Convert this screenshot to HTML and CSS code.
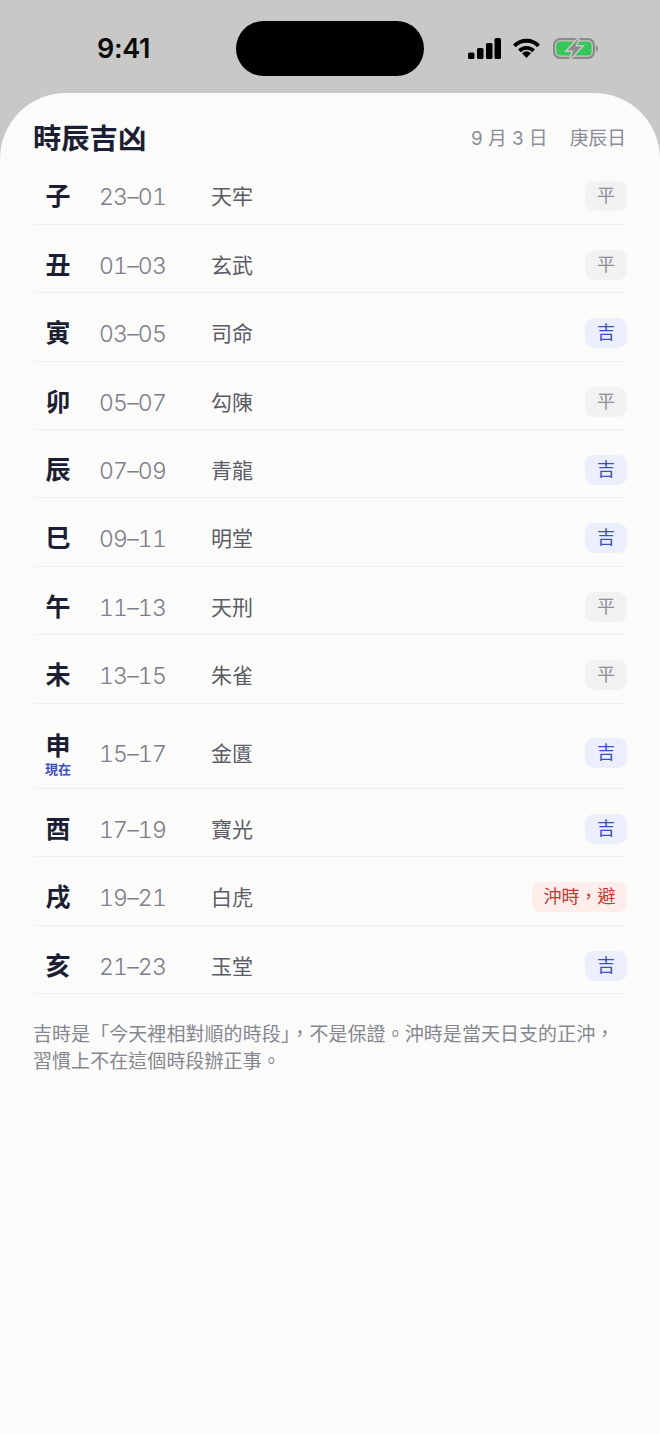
FILE: index.html
```html
<!DOCTYPE html>
<html lang="zh-Hant">
<head>
<meta charset="utf-8">
<title>時辰吉凶</title>
<link rel="stylesheet" href="styles.css">
</head>
<body>
<div class="status">
  <div class="clock">9:41</div>
  <div class="island"></div>
  <div class="indicators">
    <svg class="signal" width="33" height="21" viewBox="0 0 33 21"><rect x="0" y="14.5" width="6.5" height="6.5" rx="1.6"/><rect x="9" y="10" width="6.5" height="11" rx="1.6"/><rect x="18" y="5" width="6.5" height="16" rx="1.6"/><rect x="26.5" y="0" width="6.5" height="21" rx="1.6"/></svg>
    <svg class="wifi" width="27" height="20" viewBox="0 0 27 20"><path class="arc" d="M1.4 7.8A17 17 0 0 1 25.6 7.8"/><path class="arc" d="M6.4 12.8A10 10 0 0 1 20.6 12.8"/><path d="M13.5 20L9 15.2A6.4 6.4 0 0 1 18 15.2Z"/></svg>
    <svg class="battery" width="45" height="21" viewBox="0 0 45 21"><rect class="shell" x="1.1" y="1.1" width="39.8" height="18.8" rx="6"/><rect class="charge" x="3.4" y="3.4" width="35.2" height="14.2" rx="3.6"/><path class="nub" d="M43 7a4 4 0 0 1 0 7Z"/><path class="bolt" d="M25.5 0.5L14.5 12.4h6L17.5 20.5l11-11.9h-6Z"/></svg>
  </div>
</div>
<main class="sheet">
  <header class="head">
    <h1 class="title">時辰吉凶</h1>
    <div class="date"><span>9 月 3 日</span><span>庚辰日</span></div>
  </header>
  <ul class="list">
    <li class="row"><div class="branch"><b>子</b></div><span class="time">23–01</span><span class="name">天牢</span><span class="tag flat">平</span></li>
    <li class="row"><div class="branch"><b>丑</b></div><span class="time">01–03</span><span class="name">玄武</span><span class="tag flat">平</span></li>
    <li class="row"><div class="branch"><b>寅</b></div><span class="time">03–05</span><span class="name">司命</span><span class="tag good">吉</span></li>
    <li class="row"><div class="branch"><b>卯</b></div><span class="time">05–07</span><span class="name">勾陳</span><span class="tag flat">平</span></li>
    <li class="row"><div class="branch"><b>辰</b></div><span class="time">07–09</span><span class="name">青龍</span><span class="tag good">吉</span></li>
    <li class="row"><div class="branch"><b>巳</b></div><span class="time">09–11</span><span class="name">明堂</span><span class="tag good">吉</span></li>
    <li class="row"><div class="branch"><b>午</b></div><span class="time">11–13</span><span class="name">天刑</span><span class="tag flat">平</span></li>
    <li class="row"><div class="branch"><b>未</b></div><span class="time">13–15</span><span class="name">朱雀</span><span class="tag flat">平</span></li>
    <li class="row current"><div class="branch"><b>申</b><small class="now">現在</small></div><span class="time">15–17</span><span class="name">金匱</span><span class="tag good">吉</span></li>
    <li class="row"><div class="branch"><b>酉</b></div><span class="time">17–19</span><span class="name">寶光</span><span class="tag good">吉</span></li>
    <li class="row"><div class="branch"><b>戌</b></div><span class="time">19–21</span><span class="name">白虎</span><span class="tag bad">沖時，避</span></li>
    <li class="row"><div class="branch"><b>亥</b></div><span class="time">21–23</span><span class="name">玉堂</span><span class="tag good">吉</span></li>
  </ul>
  <p class="note">吉時是「今天裡相對順的時段」，不是保證。沖時是當天日支的正沖，習慣上不在這個時段辦正事。</p>
</main>
</body>
</html>
```
FILE: styles.css
```css
* { box-sizing: border-box; }
html, body { margin: 0; padding: 0; }
body {
  width: 660px;
  height: 1434px;
  overflow: hidden;
  background: #c8c8c6;
  font-family: Inter, "Noto Sans CJK TC", sans-serif;
}
.status {
  height: 93px;
  padding-top: 21px;
  display: grid;
  grid-template-columns: 1fr 188px 1fr;
}
.clock {
  height: 55px;
  line-height: 55px;
  padding-left: 97px;
  font-size: 27px;
  font-weight: 600;
  letter-spacing: -0.3px;
  color: #0b0b0b;
}
.island { height: 55px; border-radius: 28px; background: #000; }
.indicators {
  height: 55px;
  padding-left: 44px;
  display: flex;
  align-items: center;
}
.signal { fill: #000; margin-right: 12px; }
.wifi { fill: #000; margin-right: 13px; margin-top: -1px; }
.wifi .arc { fill: none; stroke: #000; stroke-width: 3.8; }
.shell { fill: none; stroke: #8b8b89; stroke-width: 2.2; }
.charge { fill: #34c759; }
.nub { fill: #8b8b89; }
.bolt { fill: #8b8b89; stroke: #c8c8c6; stroke-width: 3; paint-order: stroke; }
.sheet {
  height: 1341px;
  background: #fbfbf9;
  border-radius: 66px 66px 0 0;
  padding: 0 34px;
}
.head {
  height: 63.4px;
  padding-top: 29px;
  display: flex;
  justify-content: space-between;
  align-items: flex-start;
}
.title {
  margin: 0 0 0 -1px;
  font-size: 28.3px;
  line-height: 34px;
  font-weight: 700;
  color: #1c1f33;
}
.date {
  display: flex;
  gap: 22px;
  font-size: 18.8px;
  line-height: 34px;
  color: #8a8d98;
}
.list { margin: 0; padding: 0; list-style: none; }
.row {
  display: flex;
  align-items: center;
  padding: 25px 0 12.4px;
  border-bottom: 1px solid #f0f0ee;
}
.row.current { padding: 24px 0 9.4px; }
.current .branch { padding-top: 4px; }
.branch {
  width: 48px;
  margin-right: 17px;
  text-align: center;
  display: flex;
  flex-direction: column;
  align-items: center;
}
.branch b {
  font-size: 25px;
  line-height: 28px;
  height: 28px;
  font-weight: 700;
  color: #1c1f33;
}
.now {
  font-size: 13px;
  line-height: 19px;
  font-weight: 700;
  color: #3b4fc4;
}
.time {
  width: 112px;
  padding-top: 2px;
  font-size: 23px;
  line-height: 28px;
  font-weight: 300;
  letter-spacing: -0.8px;
  font-variant-numeric: tabular-nums;
  color: #7c7e89;
}
.name {
  flex: 1;
  padding-top: 2px;
  font-size: 21px;
  line-height: 28px;
  color: #5a5c66;
}
.tag {
  height: 30px;
  line-height: 30px;
  padding: 0 12px;
  margin-right: -1px;
  border-radius: 9px;
  font-size: 18px;
}
.flat { background: #f2f2f3; color: #8e8e93; }
.good { background: #ebeffb; color: #3b50c0; }
.bad { padding: 0 11.5px; background: #fdeeec; color: #c7392f; }
.note {
  margin: 0 0 0 -1px;
  padding-top: 25px;
  width: 592px;
  font-family: "Noto Sans CJK TC", sans-serif;
  font-size: 19px;
  letter-spacing: 0.06px;
  line-height: 27px;
  color: #85878f;
}
```
